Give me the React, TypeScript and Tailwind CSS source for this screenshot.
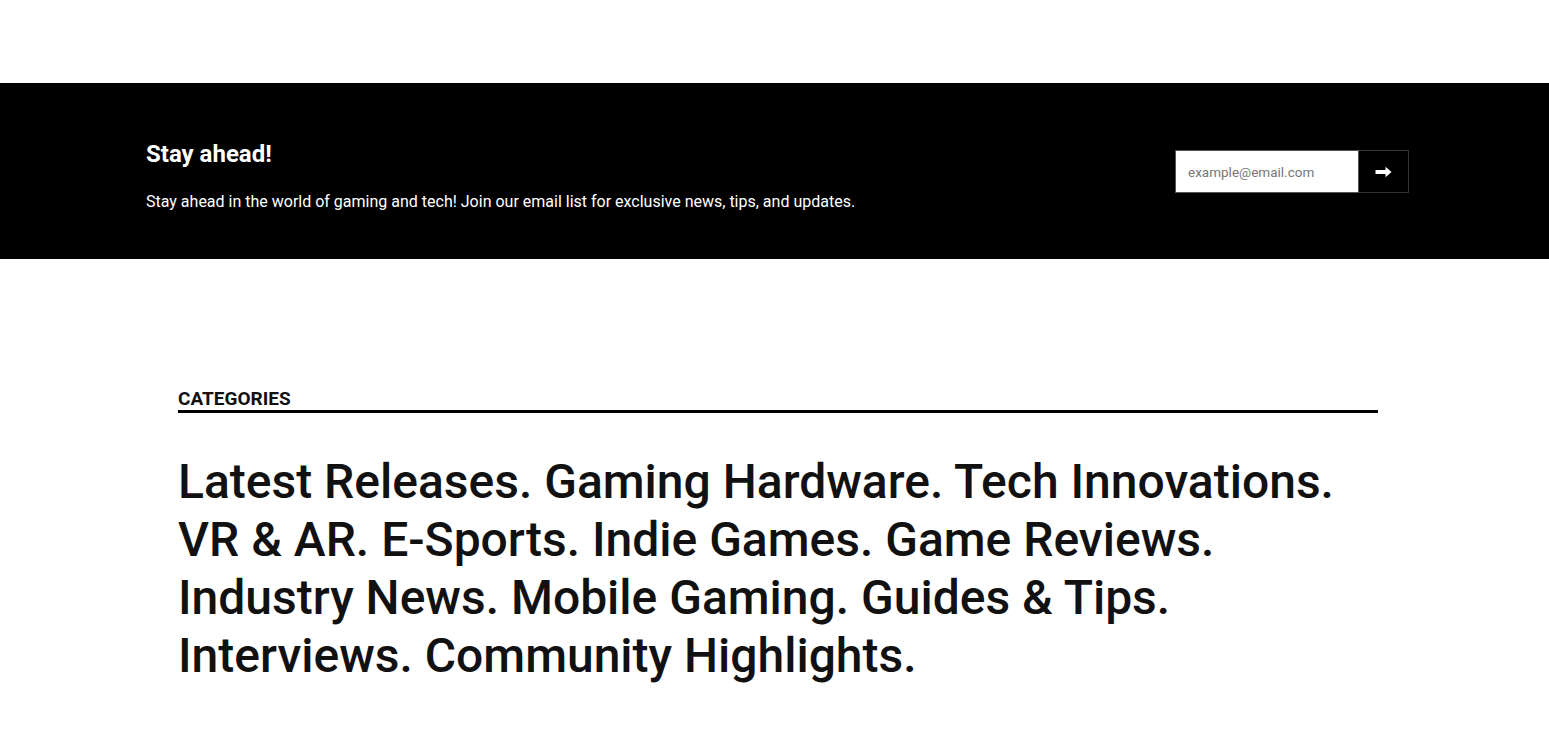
import React from "react";

export default function App() {
  const cats = "Latest Releases. Gaming Hardware. Tech Innovations. VR & AR. E-Sports. Indie Games. Game Reviews. Industry News. Mobile Gaming. Guides & Tips. Interviews. Community Highlights.";
  return (
    <div className="min-h-[744px] bg-white" style={{ fontFamily: "Roboto, 'Liberation Sans', sans-serif" }}>
      <div className="h-[83px]" />
      <section className="h-[176px] bg-black text-white flex items-center justify-between pl-[146px] pr-[140px]">
        <div className="pt-[10px]">
          <h2 className="text-[24px] font-bold leading-[28px]">Stay ahead!</h2>
          <p className="mt-[23px] text-[16px] leading-[22px]">
            Stay ahead in the world of gaming and tech! Join our email list for exclusive news, tips, and updates.
          </p>
        </div>
        <div className="flex mt-[1px]">
          <input
            type="email"
            placeholder="example@email.com"
            className="w-[184px] h-[43px] bg-white border border-[#555] px-[12px] text-[13.5px] text-black placeholder:text-[#777] outline-none"
          />
          <button className="w-[50px] h-[43px] border border-[#333] border-l-0 bg-black flex items-center justify-center">
            <svg width="17" height="12" viewBox="0 0 17 12">
              <path d="M0.5 4h10V0.8L16.5 6l-6 5.2V8h-10z" fill="white" />
            </svg>
          </button>
        </div>
      </section>
      <section className="pt-[129px] px-[178px] w-[1556px]">
        <div className="w-[1200px]">
          <h3 className="text-[19px] font-bold leading-[22px] text-[#111]">CATEGORIES</h3>
          <div className="h-[3px] bg-black" />
          <p className="mt-[40px] text-[48px] leading-[58px] text-[#111] font-medium">
            {cats}
          </p>
        </div>
      </section>
    </div>
  );
}
